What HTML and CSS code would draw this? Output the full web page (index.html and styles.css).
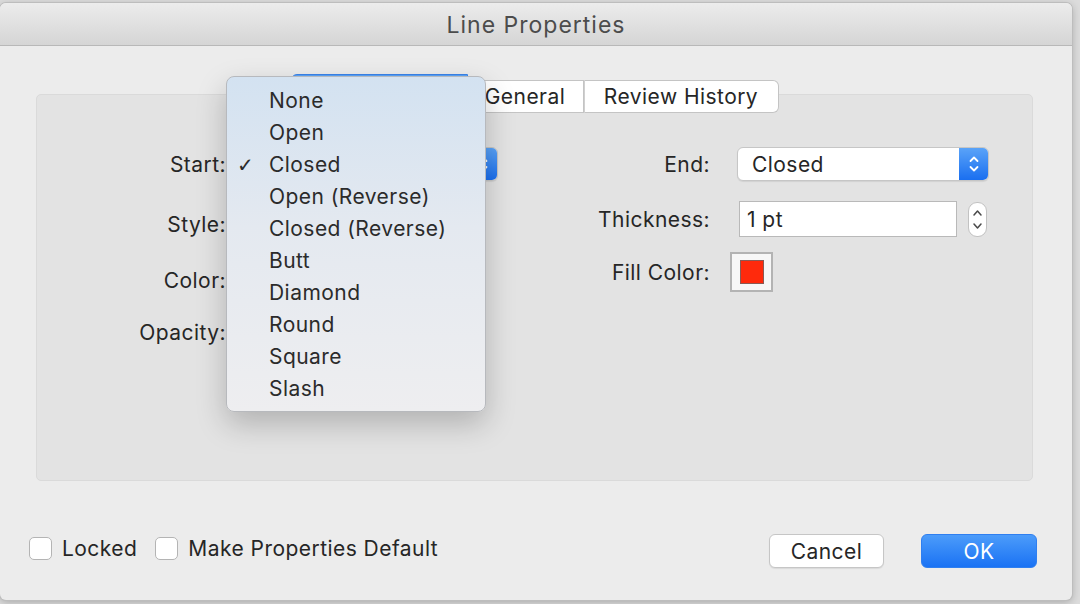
FILE: index.html
```html
<!DOCTYPE html>
<html>
<head>
<meta charset="utf-8">
<link rel="stylesheet" href="styles.css">
</head>
<body>
<div class="window">
  <div class="titlebar">Line Properties</div>
  <div class="panel">
    <div class="tabs">
      <div class="tab tab-selected">Appearance</div>
      <div class="tab tab-general">General</div>
      <div class="tab tab-review">Review History</div>
    </div>
    <div class="form">
      <div class="col col-left">
        <div class="row">
          <div class="label label-left">Start:</div>
          <div class="popup popup-start">
            <span class="popup-text">Closed</span>
            <span class="popup-arrows"><svg width="10" height="18" viewBox="0 0 10 18"><path d="M1.5 6 L5 2.5 L8.5 6 M1.5 12 L5 15.5 L8.5 12" fill="none" stroke="#fff" stroke-width="1.8" stroke-linecap="round" stroke-linejoin="round"/></svg></span>
          </div>
        </div>
        <div class="row row-style"><div class="label label-left">Style:</div></div>
        <div class="row"><div class="label label-left">Color:</div></div>
        <div class="row row-opacity"><div class="label label-left">Opacity:</div></div>
      </div>
      <div class="col col-right">
        <div class="row">
          <div class="label label-right">End:</div>
          <div class="popup">
            <span class="popup-text">Closed</span>
            <span class="popup-arrows"><svg width="10" height="18" viewBox="0 0 10 18"><path d="M1.5 6 L5 2.5 L8.5 6 M1.5 12 L5 15.5 L8.5 12" fill="none" stroke="#fff" stroke-width="1.8" stroke-linecap="round" stroke-linejoin="round"/></svg></span>
          </div>
        </div>
        <div class="row row-thick">
          <div class="label label-right">Thickness:</div>
          <div class="field">1 pt</div>
          <div class="stepper"><svg width="19" height="35" viewBox="0 0 19 35"><path d="M6 13 L9.5 9 L13 13 M6 22 L9.5 26 L13 22" fill="none" stroke="#4a4a4a" stroke-width="1.5" stroke-linecap="round" stroke-linejoin="round"/></svg></div>
        </div>
        <div class="row row-fill">
          <div class="label label-right">Fill Color:</div>
          <div class="swatch"><div class="swatch-inner"></div></div>
        </div>
      </div>
    </div>
  </div>
  <div class="footer">
    <label class="check"><span class="box"></span>Locked</label>
    <label class="check check-2"><span class="box"></span>Make Properties Default</label>
    <div class="spacer"></div>
    <div class="btn btn-cancel">Cancel</div>
    <div class="btn btn-ok">OK</div>
  </div>

  <div class="menu">
    <div class="menu-item">None</div>
    <div class="menu-item">Open</div>
    <div class="menu-item checked"><span class="checkmark">✓</span>Closed</div>
    <div class="menu-item">Open (Reverse)</div>
    <div class="menu-item">Closed (Reverse)</div>
    <div class="menu-item">Butt</div>
    <div class="menu-item">Diamond</div>
    <div class="menu-item">Round</div>
    <div class="menu-item">Square</div>
    <div class="menu-item">Slash</div>
  </div>
</div>
</body>
</html>
```

FILE: styles.css
```css
* { box-sizing: border-box; }

html, body {
  margin: 0;
  padding: 0;
  width: 1080px;
  height: 604px;
  overflow: hidden;
}

body {
  background: #dcdcdc;
  font-family: "Inter", "Noto Sans", sans-serif;
  font-size: 21px;
  letter-spacing: 0.45px;
  color: #262626;
  padding-top: 3px;
}

.window {
  position: relative;
  width: 1072px;
  height: 597px;
  background: #ececec;
  border-radius: 6px;
  box-shadow: 0 0 0 1px #bdbdbd, 0 2px 8px rgba(0,0,0,0.25);
  display: flex;
  flex-direction: column;
}

.titlebar {
  height: 43px;
  flex: none;
  background: linear-gradient(#ececec, #d5d5d5);
  border-bottom: 1px solid #b8b8b8;
  border-radius: 6px 6px 0 0;
  display: flex;
  align-items: center;
  justify-content: center;
  font-size: 23px;
  letter-spacing: 1px;
  color: #4c4c4c;
  padding-top: 2px;
}

.panel {
  margin: 48px 39px 0 36px;
  height: 387px;
  background: #e3e3e3;
  border: 1px solid #dadada;
  border-radius: 5px;
  flex: none;
}

.tabs {
  display: flex;
  justify-content: center;
  align-items: flex-end;
  margin-top: -15px;
  height: 33px;
}

.tab {
  height: 33px;
  display: flex;
  align-items: center;
  justify-content: center;
  background: #fff;
  border: 1px solid #c4c4c4;
  color: #262626;
  flex: none;
}

.tab-selected {
  width: 177px;
  height: 39px;
  background: linear-gradient(#5aa3f7, #2a7df2);
  border-color: #3b84ea;
  color: #fff;
  border-radius: 6px 0 0 6px;
}

.tab-general {
  width: 116px;
  border-left: none;
}

.tab-review {
  width: 195px;
  border-left: 1px solid #d0d0d0;
  border-radius: 0 6px 6px 0;
}

.form {
  display: flex;
  margin-top: 34px;
}

.col {
  display: flex;
  flex-direction: column;
}

.col-left {
  width: 513px;
  gap: 22px;
}

.col-right {
  gap: 18px;
}

.row {
  display: flex;
  align-items: center;
  height: 34px;
}

.row-style { margin-top: 4px; }
.row-opacity { margin-top: -4px; }

.label {
  text-align: right;
  flex: none;
}

.label-left {
  width: 189px;
  margin-right: 20px;
}

.label-right {
  width: 160px;
  margin-right: 27px;
}

.popup {
  width: 252px;
  height: 34px;
  background: #fff;
  border: 1px solid #c6c6c6;
  border-radius: 6px;
  display: flex;
  align-items: center;
  overflow: hidden;
  box-shadow: 0 1px 1px rgba(0,0,0,0.08);
}

.popup-text {
  flex: 1;
  padding-left: 14px;
}

.popup-arrows {
  width: 29px;
  height: 100%;
  background: linear-gradient(#5aa3f8, #1a6ff0);
  display: flex;
  align-items: center;
  justify-content: center;
}

.row-thick {
  height: 36px;
  margin-top: 2px;
}

.field {
  width: 218px;
  height: 36px;
  margin-left: 2px;
  background: #fff;
  border: 1px solid #b9b9b9;
  padding-left: 7px;
  display: flex;
  align-items: center;
}

.stepper {
  width: 19px;
  height: 35px;
  margin-left: 11px;
  background: #fff;
  border: 1px solid #c2c2c2;
  border-radius: 9px;
  display: flex;
  align-items: center;
  justify-content: center;
  overflow: hidden;
}

.stepper svg { flex: none; }

.row-fill {
  height: 40px;
  margin-top: -3px;
}

.swatch {
  width: 43px;
  height: 40px;
  margin-left: -7px;
  background: #f7f7f7;
  border: 2px solid #b3b3b3;
  display: flex;
  align-items: center;
  justify-content: center;
}

.swatch-inner {
  width: 24px;
  height: 24px;
  background: #ff2a0c;
  border: 1px solid #8a5a55;
}

.footer {
  flex: none;
  margin-top: auto;
  height: 103px;
  display: flex;
  align-items: center;
  padding: 0 35px 0 29px;
}

.check {
  display: flex;
  align-items: center;
  gap: 10px;
}

.check-2 {
  margin-left: 18px;
}

.box {
  width: 23px;
  height: 23px;
  background: #fff;
  border: 1px solid #b4b4b4;
  border-radius: 5px;
  flex: none;
}

.spacer { flex: 1; }

.btn {
  width: 115px;
  height: 34px;
  margin-top: 5px;
  border-radius: 6px;
  display: flex;
  align-items: center;
  justify-content: center;
  flex: none;
}

.btn-cancel {
  background: #fff;
  border: 1px solid #c6c6c6;
  box-shadow: 0 1px 1px rgba(0,0,0,0.08);
}

.btn-ok {
  margin-left: 37px;
  width: 116px;
  background: linear-gradient(#4c9cfa, #1a72f4);
  color: #fff;
  border: 1px solid #2f7ff0;
}

.menu {
  position: absolute;
  left: 226px;
  top: 73px;
  width: 260px;
  height: 336px;
  padding: 8px 0;
  border-radius: 8px;
  border: 1px solid #b7b9bd;
  background: linear-gradient(#d3e2f1 0%, #e4e9f0 45%, #eeeef0 100%);
  box-shadow: 0 12px 30px rgba(0,0,0,0.22);
}

.menu-item {
  position: relative;
  height: 32px;
  line-height: 32px;
  padding-left: 42px;
  color: #2b2b2b;
}

.checkmark {
  position: absolute;
  left: 10px;
  top: 0;
  font-family: "DejaVu Sans", sans-serif;
  font-size: 20px;
  letter-spacing: 0;
}
```
